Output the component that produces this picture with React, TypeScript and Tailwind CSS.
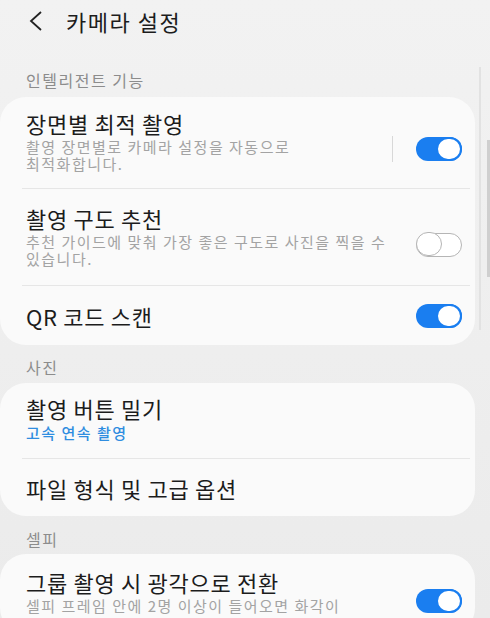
const font = { fontFamily: '"Noto Sans CJK KR", "Noto Sans", sans-serif' }

const Toggle = ({ on }: { on: boolean }) => {
    if (on) {
        return (
            <div className="relative h-[24px] w-[46px] rounded-full bg-[#1a7ef0]">
                <div className="absolute right-0 top-0 h-[24px] w-[26px] rounded-full border-2 border-[#1a7ef0] bg-white" />
            </div>
        )
    }
    return (
        <div className="relative h-[24px] w-[46px] rounded-full border-[1.5px] border-[#b5b5b5] bg-white">
            <div className="absolute -left-[1.5px] -top-[1.5px] h-[24px] w-[26px] rounded-full border-[1.5px] border-[#b5b5b5] bg-white" />
        </div>
    )
}

type RowProps = {
    title: string
    sub?: string
    subWidth?: string
    blue?: string
    toggle?: boolean
    bar?: boolean
    className?: string
}

const Row = ({ title, sub, subWidth, blue, toggle, bar, className }: RowProps) => {
    return (
        <div className={`flex pl-[26px] pr-[13px] ${className ?? ""}`}>
            <div className="flex min-w-0 flex-1 flex-col">
                <p className="whitespace-nowrap text-[22px] leading-[28px] tracking-[0.7px] text-[#1c1c1c]">{title}</p>
                {sub && (
                    <p className={`mt-[1px] break-keep text-[15px] leading-[17px] tracking-[1.5px] text-[#a3a3a3] ${subWidth ?? ""}`}>{sub}</p>
                )}
                {blue && (
                    <p className="mt-[2px] text-[15px] font-medium leading-[18px] tracking-[1.5px] text-[#2f8de0]">{blue}</p>
                )}
            </div>
            {bar && <div className="mr-[23px] h-[26px] w-px shrink-0 self-center bg-[#d8d8d8]" />}
            {toggle !== undefined && (
                <div className="shrink-0 self-center">
                    <Toggle on={toggle} />
                </div>
            )}
        </div>
    )
}

const Divider = () => <div className="ml-[22px] mr-[5px] h-px bg-[#e6e6e6]" />

const Label = ({ text, className }: { text: string; className?: string }) => (
    <p className={`pl-[26px] text-[16px] leading-[20px] tracking-[1.5px] text-[#8c8c8c] ${className ?? ""}`}>{text}</p>
)

export default function App() {
    return (
        <div className="relative h-[618px] w-[490px] overflow-hidden bg-gradient-to-b from-[#f2f2f2] to-[#ebebeb]" style={font}>
            {/* header */}
            <div className="flex h-[42px] items-center">
                <svg width="14" height="22" viewBox="0 0 14 22" className="ml-[29px]">
                    <path d="M12 2 L2 11 L12 20" fill="none" stroke="#222" strokeWidth="1.8" />
                </svg>
                <h1 className="ml-[23px] text-[22px] tracking-[1.5px] text-[#1c1c1c]">카메라 설정</h1>
            </div>

            <Label text="인텔리전트 기능" className="mt-[28px]" />
            <div className="mr-[15px] mt-[7px] rounded-[26px] bg-[#fafafa]">
                <Row
                    className="h-[91px] pt-[12px]"
                    title="장면별 최적 촬영"
                    sub="촬영 장면별로 카메라 설정을 자동으로 최적화합니다."
                    subWidth="w-[355px]"
                    toggle={true}
                    bar
                />
                <Divider />
                <Row
                    className="h-[96px] pt-[15px]"
                    title="촬영 구도 추천"
                    sub="추천 가이드에 맞춰 가장 좋은 구도로 사진을 찍을 수 있습니다."
                    subWidth="w-[372px]"
                    toggle={false}
                />
                <Divider />
                <Row className="h-[59px] items-center" title="QR 코드 스캔" toggle={true} />
            </div>

            <Label text="사진" className="mt-[12px]" />
            <div className="mr-[15px] mt-[6px] rounded-[26px] bg-[#fafafa]">
                <Row className="h-[75px] pt-[11px]" title="촬영 버튼 밀기" blue="고속 연속 촬영" />
                <Divider />
                <Row className="h-[57px] items-center" title="파일 형식 및 고급 옵션" />
            </div>

            <Label text="셀피" className="mt-[13px]" />
            <div className="mr-[15px] mt-[5px] rounded-[26px] bg-[#fafafa]">
                <Row
                    className="h-[80px] pt-[14px]"
                    title="그룹 촬영 시 광각으로 전환"
                    sub="셀피 프레임 안에 2명 이상이 들어오면 화각이"
                    subWidth="w-[372px]"
                    toggle={true}
                />
            </div>

            {/* scroll bars */}
            <div className="absolute left-[479px] top-[67px] h-[263px] w-[2px] bg-[#e2e2e2]" />
            <div className="absolute left-[487px] top-[140px] h-[137px] w-[3px] bg-[#cfcfcf]" />
        </div>
    )
}
